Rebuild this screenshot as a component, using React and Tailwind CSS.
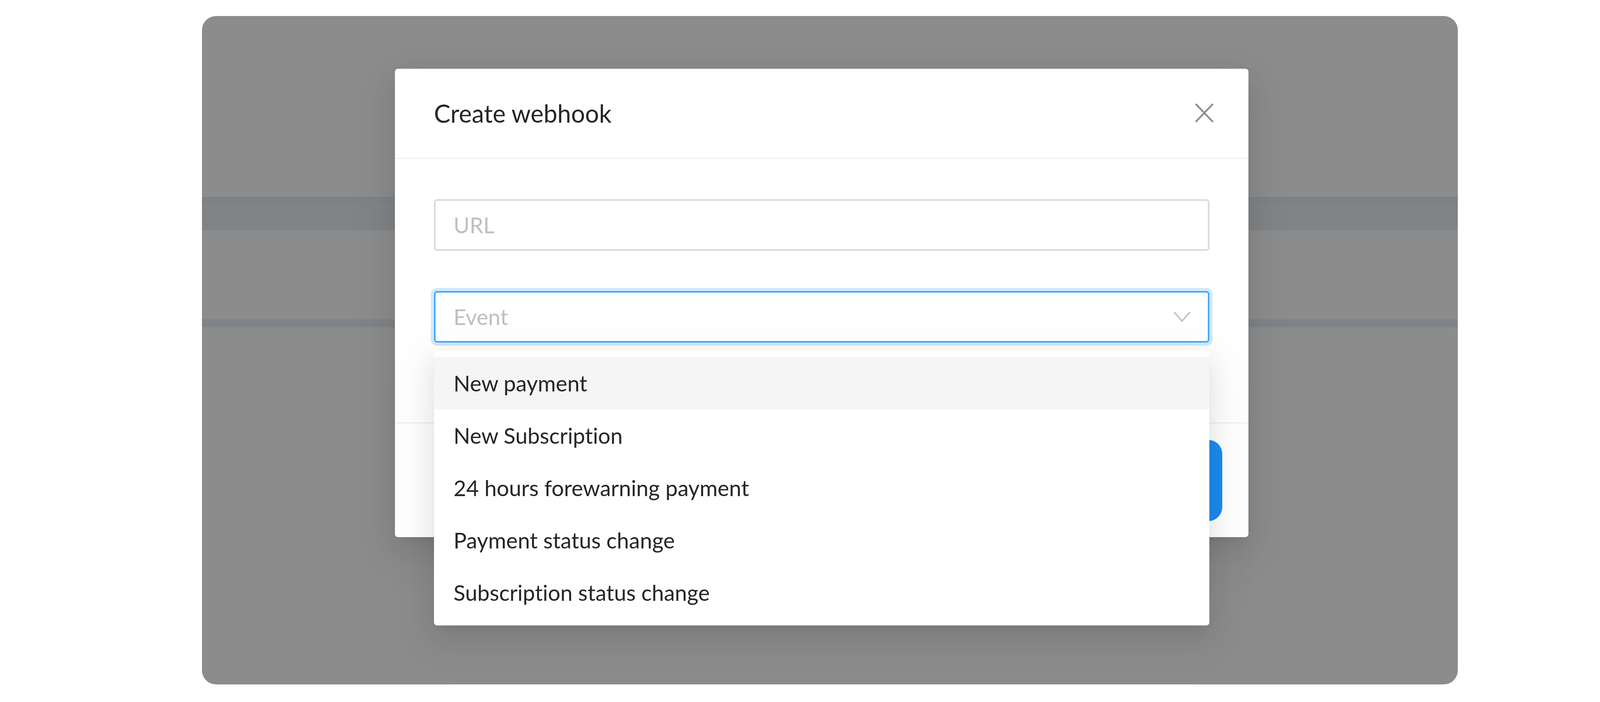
import React from "react";

const items = [
  "New payment",
  "New Subscription",
  "24 hours forewarning payment",
  "Payment status change",
  "Subscription status change",
];

export default function App() {
  return (
    <div className="w-[4250px] h-[1797px] bg-white pt-[41px] pl-[517px] font-['Lato','Noto_Sans',sans-serif] [font-variant-ligatures:none]">
      <div className="relative w-[3215px] h-[1711px] rounded-[36px] bg-[#8c8c8c] overflow-hidden">
        <div className="h-[463px]" />
        <div className="h-[86px] bg-[#818487] border-t-[16px] border-[#7f8285]" />
        <div className="h-[227px]" />
        <div className="h-[21px] bg-[#818487]" />

        <div className="absolute left-[494px] top-[135px] w-[2185px] bg-white rounded-[8px] shadow-[0_12px_24px_-16px_rgba(0,0,0,0.12),0_24px_64px_0_rgba(0,0,0,0.08),0_36px_112px_32px_rgba(0,0,0,0.05)]">
          <div className="relative h-[231px] px-[100px] flex items-center border-b-[3px] border-[#f0f0f0]">
            <span className="text-[63px] leading-[92px] text-[#262626]">Create webhook</span>
            <button className="absolute top-0 right-0 w-[226px] h-[226px] flex items-center justify-center">
              <svg width="48" height="50" viewBox="0 0 48 50">
                <path d="M2 2 L46 48 M46 2 L2 48" stroke="#8c8c8c" strokeWidth="4.5" fill="none" />
              </svg>
            </button>
          </div>

          <div className="px-[100px] pt-[103px] pb-[204px] flex flex-col gap-[103px]">
            <div className="h-[132px] border-[4px] border-[#d9d9d9] rounded-[8px] flex items-center px-[46px]">
              <span className="text-[56px] text-[#bfbfbf]">URL</span>
            </div>
            <div className="relative">
              <div className="h-[132px] border-[4px] border-[#40a9ff] rounded-[8px] flex items-center justify-between pl-[46px] pr-[44px] bg-white shadow-[0_0_0_8px_rgba(24,144,255,0.2)]">
                <span className="text-[56px] text-[#bfbfbf]">Event</span>
                <svg width="44" height="30" viewBox="0 0 44 30">
                  <path d="M2 3 L22 26 L42 3" stroke="#bfbfbf" strokeWidth="3.5" fill="none" />
                </svg>
              </div>
              <div className="absolute z-10 left-0 right-0 top-[calc(100%+20px)] bg-white rounded-[8px] py-[17px] shadow-[0_12px_24px_-16px_rgba(0,0,0,0.12),0_24px_64px_0_rgba(0,0,0,0.08),0_36px_112px_32px_rgba(0,0,0,0.05)]">
                {items.map((t, i) => (
                  <div
                    key={t}
                    className={
                      "h-[134px] flex items-center px-[50px] text-[56px] text-[#262626] " +
                      (i === 0 ? "bg-[#f5f5f5]" : "")
                    }
                  >
                    {t}
                  </div>
                ))}
              </div>
            </div>
          </div>

          <div className="border-t-[3px] border-[#f0f0f0] pt-[42px] pb-[41px] px-[67px] flex justify-end gap-[34px]">
            <button className="h-[208px] w-[420px] rounded-[36px] border-[4px] border-[#d9d9d9] text-[56px] text-[#262626]">
              Cancel
            </button>
            <button className="h-[208px] w-[460px] rounded-[36px] bg-[#1a8cf0] text-[56px] text-white">
              Create
            </button>
          </div>
        </div>
      </div>
    </div>
  );
}
